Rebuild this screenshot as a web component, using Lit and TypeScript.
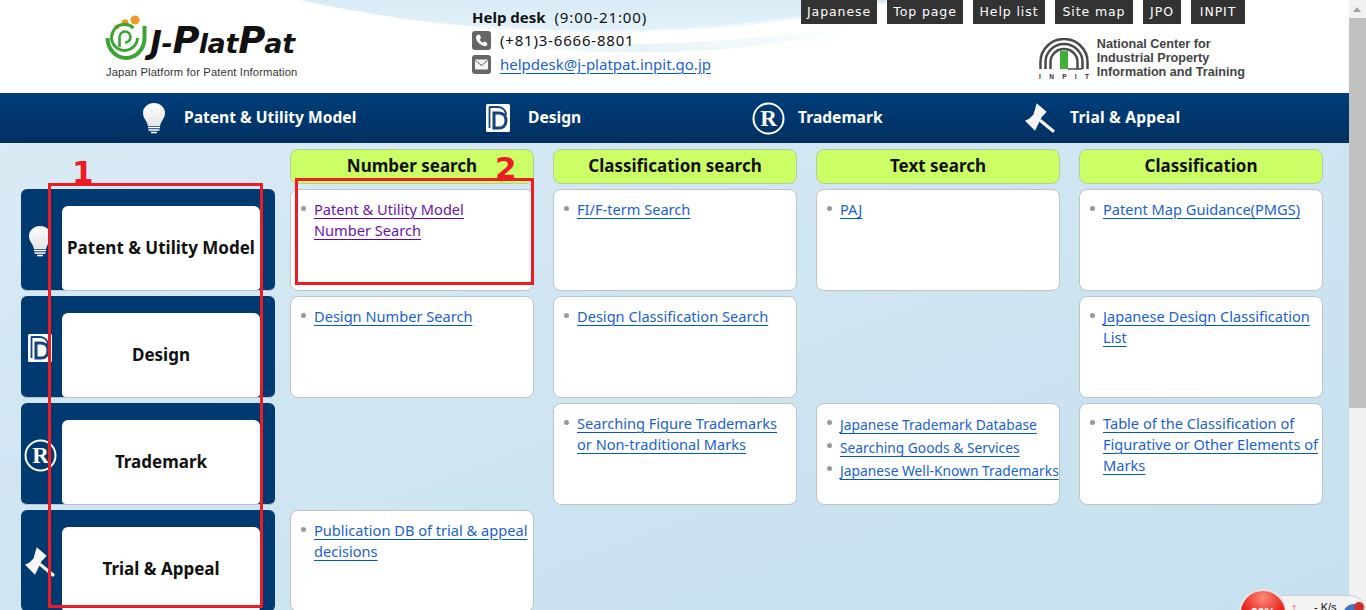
import { LitElement, html, css, svg } from "lit";
import { customElement } from "lit/decorators.js";

const bulb = svg`<svg class="ic" width="24" height="32" viewBox="0 0 24 32"><defs><linearGradient id="b" x1="0" y1="0" x2="0" y2="1"><stop offset="0" stop-color="#fff"/><stop offset="1" stop-color="#e4e4e4"/></linearGradient></defs><path fill="url(#b)" d="M12 1C5.700 1 1 5.500 1 11c0 3.500 1.600 5.600 3 8 1 1.700 1.700 3.300 2 5h12c.3-1.700 1-3.300 2-5 1.400-2.400 3-4.500 3-8 0-5.500-4.700-10-11-10z"/><path d="M6 25.500h12M6.500 28h11" stroke="#fff" stroke-width="1.400" fill="none"/><path d="M9 30.500h6" stroke="#fff" stroke-width="1.600"/></svg>`;
const dIcon = svg`<svg class="ic" width="24" height="28" viewBox="0 0 24 28"><rect width="24" height="28" rx="1.500" fill="#fff"/><path d="M3 3h9c5 0 8 3.500 8 8" fill="none" stroke="#15447c" stroke-width="1.800"/><path d="M3.500 3v21" stroke="#15447c" stroke-width="1.800"/><path d="M8 9h5c4.500 0 7 3 7 7.500S17.500 24 13 24H8z" fill="none" stroke="#15447c" stroke-width="3"/></svg>`;
const rIcon = svg`<svg class="ic" width="33" height="33" viewBox="0 0 33 33"><circle cx="16.500" cy="16.500" r="15" fill="none" stroke="#fff" stroke-width="2"/><text x="16.500" y="24" text-anchor="middle" font-family="Liberation Serif" font-weight="700" font-size="23" fill="#fff">R</text></svg>`;
const gavel = svg`<svg class="ic" width="32" height="32" viewBox="0 0 32 32"><path fill="#f6f6f6" d="M12.700 1.300l9.900 8.400-3 3.500-1.600 1.200L11 28.700 1 18.700l4.500-2.200 4-4z"/><path d="M17 17l14 11.500-2 2.500-14-11.500z" fill="#f6f6f6"/></svg>`;

const phone = svg`<svg width="19" height="19" viewBox="0 0 19 19"><rect width="19" height="19" rx="3" fill="#666"/><path fill="#fff" d="M6 3.500l2 .5 1 3.200-1.300 1.300c.6 1.500 1.500 2.500 3 3.200l1.400-1.200 2.900 1.200.3 2c-.7 1.200-1.900 1.800-3.100 1.400C8 14 4.800 10.600 4 7.300 3.700 5.700 4.600 4.300 6 3.500z"/></svg>`;
const mail = svg`<svg width="19" height="19" viewBox="0 0 19 19"><rect width="19" height="19" rx="3" fill="#666"/><rect x="3" y="4.500" width="13" height="10" rx="1" fill="#f4f4f4"/><path d="M3.500 5.500l6 5 6-5" fill="none" stroke="#666" stroke-width="1"/></svg>`;

const logoMark = svg`<svg class="mark" width="44" height="46" viewBox="0 0 44 46"><circle cx="30" cy="6" r="4.500" fill="#f39a24"/><circle cx="20" cy="8.500" r="3.300" fill="#f39a24"/><circle cx="12" cy="13" r="2.400" fill="#f39a24"/><circle cx="7.500" cy="20" r="1.700" fill="#f39a24"/><g fill="none" stroke="#3aa535"><path stroke-width="4" d="M2.500 24A18.500 20 0 0 0 39.500 24V12"/><path stroke-width="3" d="M28.500 14A13 13 0 1 0 32.500 24"/><path stroke-width="2.600" d="M14.500 33V23a5.500 5.500 0 1 1 5.500 5.500"/></g></svg>`;

const inpit = svg`<svg width="50" height="41" viewBox="0 0 50 41"><g fill="none" stroke="#4a4a4a"><path stroke-width="2.500" d="M1.500 31v-7a23.500 23 0 0 1 47 0v7"/><path stroke-width="2.500" d="M6.500 31v-7a18.500 18 0 0 1 37 0v7"/><path stroke-width="2.500" d="M11.500 31v-7a13.500 13 0 0 1 27 0v7"/><path stroke-width="1.500" d="M29 31h14"/></g><rect x="21" y="13" width="8" height="18" fill="#3fb03a"/><text x="0" y="41" font-family="Liberation Sans" font-weight="700" font-size="6.500" fill="#333" textLength="50">I N P I T</text></svg>`;

@customElement("app-root")
export class AppRoot extends LitElement {
  static styles = css`
    :host { display: block; width: 1366px; height: 610px; overflow: hidden; position: relative; font-family: "Noto Sans", "Open Sans", sans-serif; }
    a { color: #1c5fce; text-decoration: underline; text-decoration-color: #0059c8; text-underline-offset: 3px; }
    a.v { color: #6c14a8; text-decoration-color: #6a00a8; }
    .page { width: 1349px; height: 610px; overflow: hidden; position: relative; background: linear-gradient(160deg, #dcedf6 0%, #d3e7f3 35%, #c5e0ef 100%); }
    .head { height: 93px; background: #fff; position: relative; display: flex; padding-left: 105px; box-sizing: border-box; }
    .swoosh { position: absolute; left: 0; top: 0; }
    .head > div { position: relative; }
    .logo { width: 367px; padding-top: 14px; box-sizing: border-box; }
    .logo-row { display: flex; align-items: flex-end; height: 46px; }
    .jp { font: italic 700 27px/34px "DejaVu Sans", sans-serif; color: #111; white-space: nowrap; margin: 0 0 -1px 1px; letter-spacing: -.3px; }
    .jp b { font-size: 37px; letter-spacing: -1px; line-height: 30px; }
    .jp i { font-size: 32px; line-height: 30px; }
    .tag { font: 11.200px/14px "Liberation Sans", sans-serif; color: #333; margin-top: 5px; letter-spacing: .15px; margin-left: 1px; }
    .help { width: 329px; padding-top: 7px; box-sizing: border-box; font-size: 15px; color: #111; }
    .help .t { height: 21px; line-height: 21px; }
    .help .t b { margin-right: 5px; }
    .help .t span { letter-spacing: .9px; }
    .hr { display: flex; align-items: center; gap: 9px; height: 24px; line-height: 24px; font-size: 15px; }
    .hr svg { flex: none; }
    .hr .tel { letter-spacing: .8px; }
    .right { width: 444px; }
    .btns { display: grid; grid-template-columns: 76px 76px 72px 78px 38px 54px; column-gap: 10px; }
    .btns span { height: 24px; background: #333; color: #fff; font: 12.500px/24px "DejaVu Sans", sans-serif; letter-spacing: .9px; white-space: nowrap; text-align: center; }
    .org { display: flex; justify-content: flex-end; gap: 8px; margin-top: 13px; }
    .org svg { margin-top: 1px; }
    .org div { font: 700 12.650px/14px "Liberation Sans", sans-serif; color: #444; }
    .nav { height: 50px; background: linear-gradient(#003e7c, #00305f); display: grid; grid-template-columns: 344px 266px 272px auto; padding-left: 142px; color: #fff; font-weight: 700; font-size: 15.600px; }
    .nav > div { display: flex; align-items: center; }
    .nav span { margin-top: -2px; }
    .nav .a { gap: 18px; } .nav .b { gap: 18px; } .nav .c { gap: 13px; } .nav .d { gap: 14px; letter-spacing: .2px; }
    .body { display: flex; gap: 15px; padding: 6px 0 0 21px; }
    .left { display: flex; flex-direction: column; gap: 5px; padding-top: 40px; width: 254px; flex: none; }
    .lrow { height: 102px; box-sizing: border-box; background: #003a70; border-radius: 6px; border-bottom: 1px solid #b9c2c9; padding: 17px 15px 0 0; display: flex; position: relative; }
    .lic { width: 41px; flex: none; display: flex; align-items: center; justify-content: center; box-sizing: border-box; padding: 0 3px 14px 0; }
    .lin { flex: 1; background: #fff; border-radius: 6px 6px 4px 4px; display: flex; align-items: center; justify-content: center; font-weight: 700; font-size: 17px; color: #111; padding-bottom: 2px; }
    .grid { display: grid; grid-template-columns: repeat(4, 244px); column-gap: 19px; row-gap: 5px; grid-template-rows: 35px repeat(4, 102px); align-content: start; }
    .h { background: #ccff66; border: 1px solid #b9c9a5; border-radius: 8px; box-sizing: border-box; text-align: center; font-weight: 700; font-size: 17px; line-height: 31px; color: #111; }
    .card { background: #fff; border: 1px solid #bdc3c7; border-radius: 8px; box-sizing: border-box; padding: 9px 2px 0 23px; font-size: 14.600px; line-height: 21px; }
    .card ul { margin: 0; padding: 0; list-style: none; }
    .card li { position: relative; }
    .card li::before { content: ""; position: absolute; left: -13px; top: 7px; width: 5px; height: 5px; border-radius: 50%; background: #999; }
    .card.n2 ul { max-width: 190px; }
    .card.s { font-size: 13.800px; padding-top: 10px; }
    .card.s li { margin-bottom: 2px; white-space: nowrap; }
    .card.s li::before { top: 6px; }
    .mark-box { position: absolute; border: 3px solid #ed1c24; box-sizing: border-box; }
    .n { position: absolute; color: #ed1c24; font: 700 31px/31px "DejaVu Sans", sans-serif; }
    .sb { position: absolute; right: 0; top: 0; width: 17px; height: 610px; background: #f1f1f1; }
    .sb i { position: absolute; left: 4px; top: 7px; border: 4.500px solid transparent; border-top: 0; border-bottom: 5px solid #a3a3a3; }
    .sb b { position: absolute; left: 0; top: 18px; width: 17px; height: 390px; background: #c1c1c1; }
    .w { position: absolute; left: 1270px; top: 595px; width: 95px; height: 40px; border-radius: 14px; background: #f2f2f2; border: 1px solid #cfcfcf; box-sizing: border-box; font: 11px/14px "Liberation Sans", sans-serif; color: #111; padding: 4px 0 0 43px; }
    .up { position: absolute; left: 20px; top: 5px; color: #e33; font-weight: 700; font-size: 12px; }
    .ball { position: absolute; left: 1239px; top: 589px; width: 44px; height: 44px; border-radius: 50%; border: 2px solid #e4e4e4; background: radial-gradient(circle at 50% 15%, #ff8a78, #e5231b 50%); color: #fff; font: 700 12px/14px "Liberation Sans", sans-serif; text-align: center; box-sizing: content-box; }
    .ball span { display: block; margin-top: 15px; }
    .dot { position: absolute; left: 1343px; top: 604px; width: 22px; height: 22px; border-radius: 50%; background: #3f74c4; }
    .dot::after { content: ""; position: absolute; left: 11px; top: -2px; width: 10px; height: 10px; border-radius: 50%; background: #c9302c; }
  `;

  private link(t: string, v = false) {
    return html`<li><a class=${v ? "v" : ""} href="#">${t}</a></li>`;
  }
  private card(items: string[], opts: { v?: boolean; s?: boolean } = {}) {
    return html`<div class="card ${opts.s ? "s" : ""} ${opts.v ? "n2" : ""}"><ul>${items.map((t) => this.link(t, opts.v))}</ul></div>`;
  }

  render() {
    const rows: [unknown, string][] = [
      [bulb, "Patent & Utility Model"],
      [dIcon, "Design"],
      [rIcon, "Trademark"],
      [gavel, "Trial & Appeal"],
    ];
    return html`
      <div class="page">
        <div class="head">
          <svg class="swoosh" width="1349" height="93" viewBox="0 0 1349 93">
            <defs>
              <linearGradient id="sw" x1="0" y1="0" x2="0" y2="1"><stop offset="0" stop-color="#d8ebf7"/><stop offset="1" stop-color="#e4f2f9"/></linearGradient>
              <linearGradient id="sw2" x1="0" y1="0" x2="1" y2="0"><stop offset="0" stop-color="#fff"/><stop offset=".5" stop-color="#e6f4f8"/><stop offset="1" stop-color="#fff"/></linearGradient>
            </defs>
            <path d="M425 32C560 54 760 44 870 22 840 40 700 56 600 52 530 50 470 42 425 32z" fill="url(#sw2)"/>
            <path d="M300 0C390 20 490 32 600 32 720 32 820 20 895 0z" fill="url(#sw)"/>
            <path d="M300 3C370 20 480 34 600 35" fill="none" stroke="#fff" stroke-width="1.500"/>
            <path d="M480 26C600 38 760 30 880 3" fill="none" stroke="#f3fafd" stroke-width="2"/>
          </svg>
          <div class="logo">
            <div class="logo-row">${logoMark}<span class="jp"><i>J</i>-<b>P</b>lat<b>P</b>at</span></div>
            <div class="tag">Japan Platform for Patent Information</div>
          </div>
          <div class="help">
            <div class="t"><b>Help desk</b> <span>(9:00-21:00)</span></div>
            <div class="hr">${phone}<span class="tel">(+81)3-6666-8801</span></div>
            <div class="hr">${mail}<a href="#">helpdesk@j-platpat.inpit.go.jp</a></div>
          </div>
          <div class="right">
            <div class="btns"><span>Japanese</span><span>Top page</span><span>Help list</span><span>Site map</span><span>JPO</span><span>INPIT</span></div>
            <div class="org">${inpit}<div>National Center for<br />Industrial Property<br />Information and Training</div></div>
          </div>
        </div>
        <div class="nav">
          <div class="a">${bulb}<span>Patent &amp; Utility Model</span></div>
          <div class="b">${dIcon}<span>Design</span></div>
          <div class="c">${rIcon}<span>Trademark</span></div>
          <div class="d">${gavel}<span>Trial &amp; Appeal</span></div>
        </div>
        <div class="body">
          <div class="left">
            ${rows.map(([ic, t]) => html`<div class="lrow"><div class="lic">${ic}</div><div class="lin">${t}</div></div>`)}
          </div>
          <div class="grid">
            <div class="h">Number search</div><div class="h">Classification search</div><div class="h">Text search</div><div class="h">Classification</div>
            ${this.card(["Patent & Utility Model Number Search"], { v: true })}
            ${this.card(["FI/F-term Search"])}
            ${this.card(["PAJ"])}
            ${this.card(["Patent Map Guidance(PMGS)"])}
            ${this.card(["Design Number Search"])}
            ${this.card(["Design Classification Search"])}
            <div></div>
            ${this.card(["Japanese Design Classification List"])}
            <div></div>
            ${this.card(["Searching Figure Trademarks or Non-traditional Marks"])}
            ${this.card(["Japanese Trademark Database", "Searching Goods & Services", "Japanese Well-Known Trademarks"], { s: true })}
            ${this.card(["Table of the Classification of Figurative or Other Elements of Marks"])}
            ${this.card(["Publication DB of trial & appeal decisions"])}
          </div>
        </div>
        <div class="mark-box" style="left:48px;top:183px;width:215px;height:425px"></div>
        <div class="n" style="left:72px;top:157px">1</div>
        <div class="mark-box" style="left:295px;top:178px;width:239px;height:107px"></div>
        <div class="n" style="left:495px;top:153px">2</div>
      </div>
      <div class="sb"><i></i><b></b></div>
      <div class="w"><span class="up">↑</span>- K/s</div>
      <div class="ball"><span>30%</span></div>
      <div class="dot"></div>
    `;
  }
}
